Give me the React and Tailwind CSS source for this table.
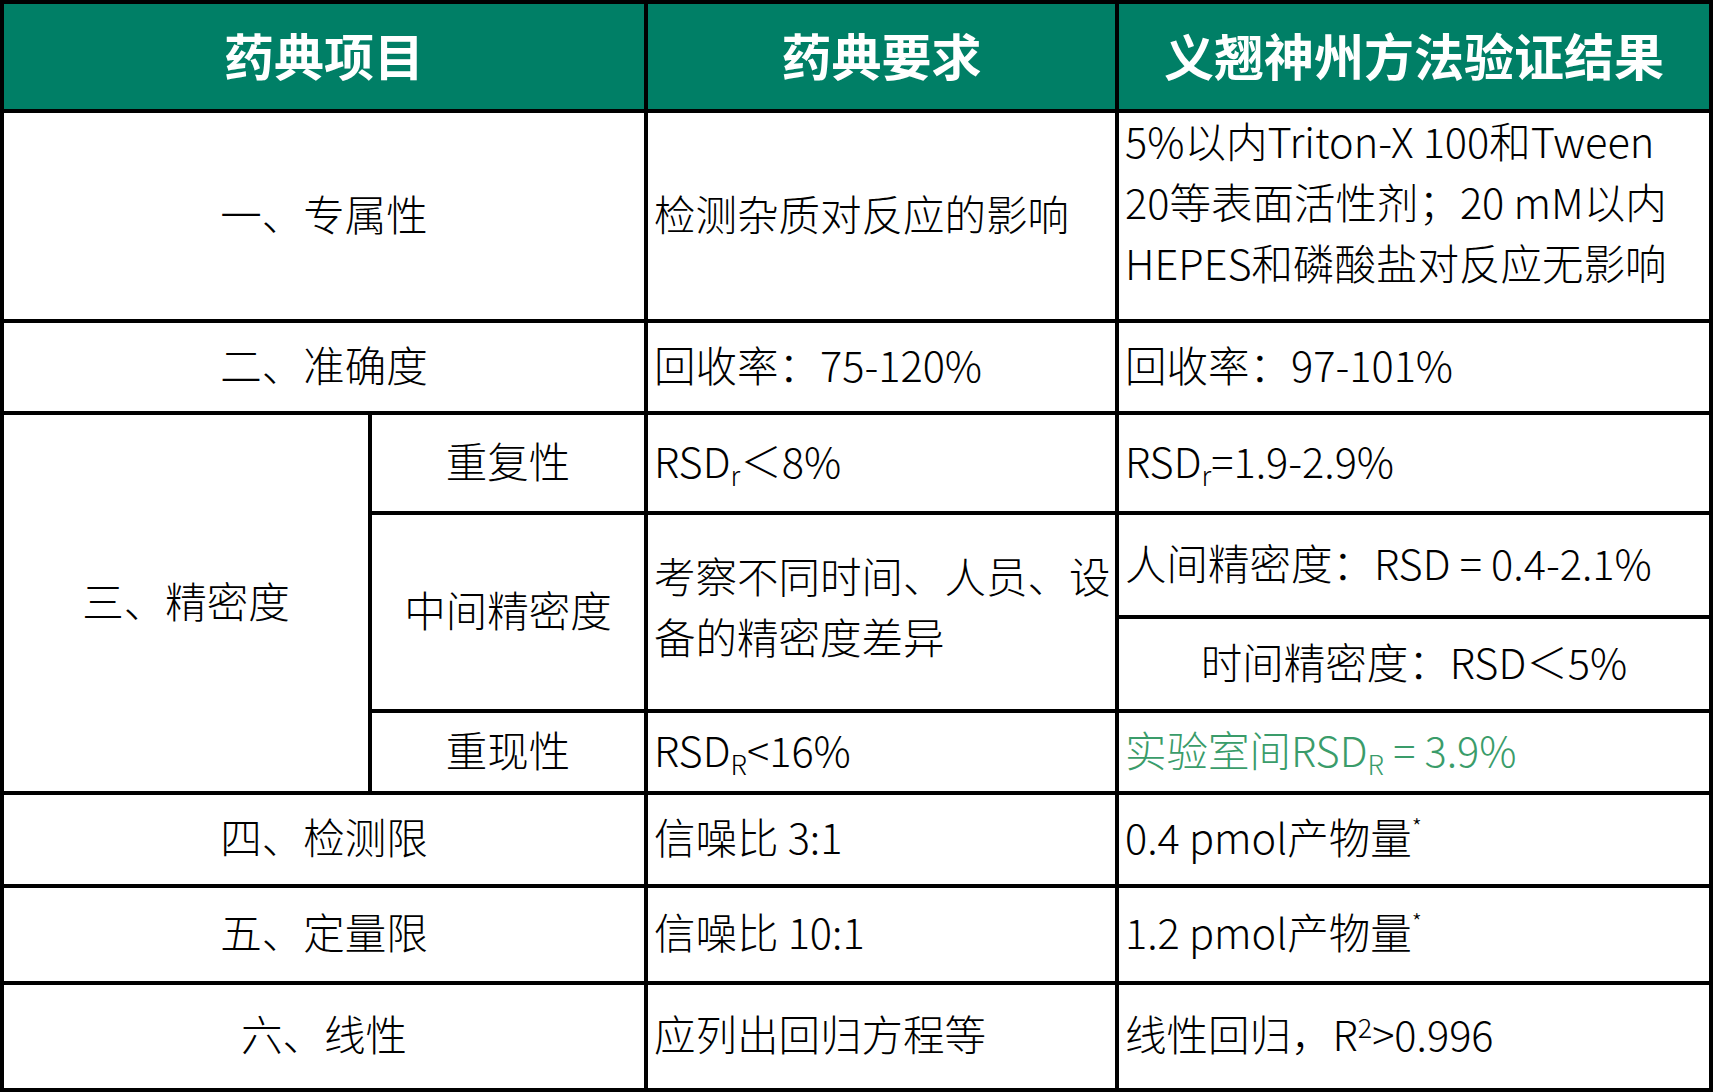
import React from 'react';

const HEAD = 'bg-[#007f66] text-white font-bold text-[50px] flex items-center justify-center pb-[4px]';
const CELL = 'bg-white text-black font-light text-[41.5px] leading-[61px] flex items-center pb-[6px]';

function Sub({ children }) {
  return <span className="relative top-[0.3em] text-[0.65em] leading-none align-baseline">{children}</span>;
}

function Sup({ children }) {
  return <span className="relative -top-[0.5em] text-[0.65em] leading-none align-baseline">{children}</span>;
}

function Star() {
  return <span className="relative -top-[0.8em] text-[0.55em] leading-none align-baseline">*</span>;
}

export default function App() {
  return (
    <div className="w-[1713px] h-[1092px] bg-black p-[4px] font-['Noto_Sans_CJK_SC','Noto_Sans',sans-serif]">
      <div className="grid h-full gap-[4px] grid-cols-[364px_272px_467px_590px] grid-rows-[105px_206px_88px_96px_100px_90px_78px_89px_93px_103px]">
        {/* header */}
        <div className={`${HEAD} col-span-2`}>药典项目</div>
        <div className={HEAD}>药典要求</div>
        <div className={HEAD}>义翘神州方法验证结果</div>

        {/* 一 */}
        <div className={`${CELL} col-span-2 justify-center`}>一、专属性</div>
        <div className={`${CELL} pl-[6px]`}>检测杂质对反应的影响</div>
        <div className={`${CELL} pl-[6px] !items-start !pb-0 whitespace-nowrap`}>
          <div className="-mt-[3px]">
            5%以内Triton-X 100和Tween
            <br />
            20等表面活性剂；20 mM以内
            <br />
            HEPES和磷酸盐对反应无影响
          </div>
        </div>

        {/* 二 */}
        <div className={`${CELL} col-span-2 justify-center`}>二、准确度</div>
        <div className={`${CELL} pl-[6px]`}>回收率：75-120%</div>
        <div className={`${CELL} pl-[6px]`}>回收率：97-101%</div>

        {/* 三 */}
        <div className={`${CELL} row-span-4 justify-center`}>三、精密度</div>
        <div className={`${CELL} justify-center`}>重复性</div>
        <div className={`${CELL} pl-[6px]`}>
          <span>RSD<Sub>r</Sub>＜8%</span>
        </div>
        <div className={`${CELL} pl-[6px]`}>
          <span>RSD<Sub>r</Sub>=1.9-2.9%</span>
        </div>

        <div className={`${CELL} row-span-2 justify-center`}>中间精密度</div>
        <div className={`${CELL} row-span-2 pl-[6px]`}>
          <div className="-mt-[6px]">
            考察不同时间、人员、设
            <br />
            备的精密度差异
          </div>
        </div>
        <div className={`${CELL} pl-[6px]`}>人间精密度：RSD = 0.4-2.1%</div>
        <div className={`${CELL} justify-center`}>时间精密度：RSD＜5%</div>

        <div className={`${CELL} justify-center`}>重现性</div>
        <div className={`${CELL} pl-[6px]`}>
          <span>RSD<Sub>R</Sub>&lt;16%</span>
        </div>
        <div className={`${CELL} pl-[6px] !text-[#3a9c6a]`}>
          <span>实验室间RSD<Sub>R</Sub> = 3.9%</span>
        </div>

        {/* 四 */}
        <div className={`${CELL} col-span-2 justify-center`}>四、检测限</div>
        <div className={`${CELL} pl-[6px]`}>信噪比 3:1</div>
        <div className={`${CELL} pl-[6px]`}>
          <span>0.4 pmol产物量<Star /></span>
        </div>

        {/* 五 */}
        <div className={`${CELL} col-span-2 justify-center`}>五、定量限</div>
        <div className={`${CELL} pl-[6px]`}>信噪比 10:1</div>
        <div className={`${CELL} pl-[6px]`}>
          <span>1.2 pmol产物量<Star /></span>
        </div>

        {/* 六 */}
        <div className={`${CELL} col-span-2 justify-center`}>六、线性</div>
        <div className={`${CELL} pl-[6px]`}>应列出回归方程等</div>
        <div className={`${CELL} pl-[6px]`}>
          <span>线性回归，R<Sup>2</Sup>&gt;0.996</span>
        </div>
      </div>
    </div>
  );
}
